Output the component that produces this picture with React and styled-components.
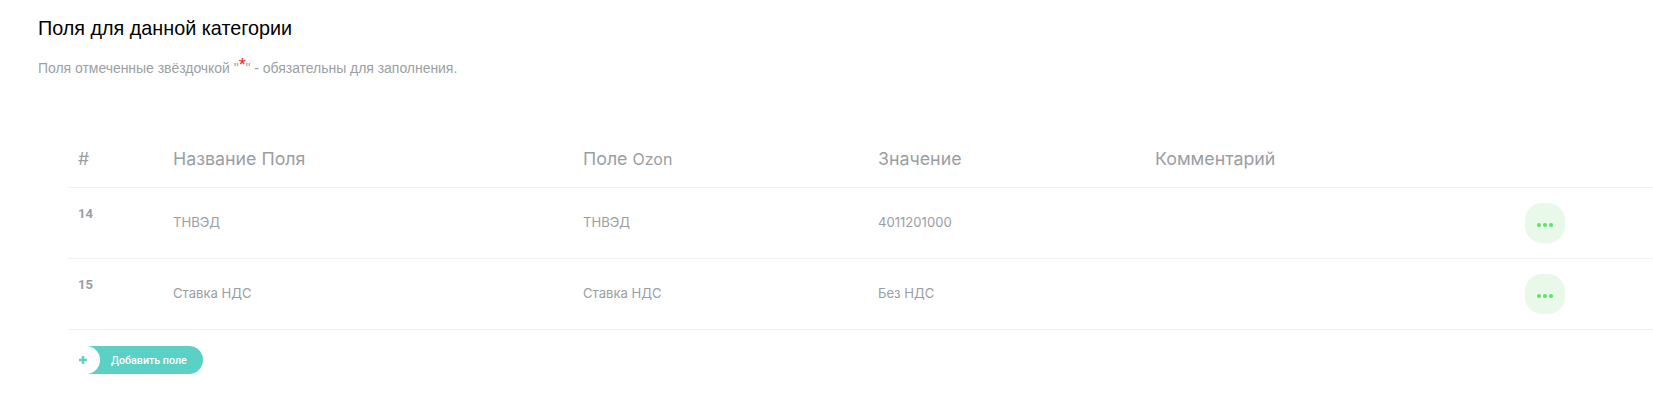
import React from 'react';
import styled, { createGlobalStyle } from 'styled-components';

const rows = [
  { id: 14, name: 'ТНВЭД', ozon: 'ТНВЭД', value: '4011201000' },
  { id: 15, name: 'Ставка НДС', ozon: 'Ставка НДС', value: 'Без НДС' },
];

const App = () => {
  return (
    <Page>
      <GlobalStyle />
      <Title>Поля для данной категории</Title>
      <Note>
        Поля отмеченные звёздочкой "<Star>*</Star>" - обязательны для заполнения.
      </Note>
      <Table>
        <HeadRow>
          <HeadCell>#</HeadCell>
          <HeadCell>Название Поля</HeadCell>
          <HeadCell>Поле <Latin>Ozon</Latin></HeadCell>
          <HeadCell>Значение</HeadCell>
          <HeadCell>Комментарий</HeadCell>
        </HeadRow>
        {rows.map((row) => (
          <Row key={row.id}>
            <RowNumber>{row.id}</RowNumber>
            <Cell>{row.name}</Cell>
            <Cell>{row.ozon}</Cell>
            <Cell>{row.value}</Cell>
            <Cell />
            <MoreButton aria-label="Действия">
              <Dot />
              <Dot />
              <Dot />
            </MoreButton>
          </Row>
        ))}
      </Table>
      <AddButton>
        <AddIcon viewBox="0 0 10 10">
          <path d="M5 1v8M1 5h8" />
        </AddIcon>
        <AddLabel>Добавить поле</AddLabel>
      </AddButton>
    </Page>
  );
};

const GlobalStyle = createGlobalStyle`
  html, body {
    margin: 0;
    background: #fff;
  }
`;
const Page = styled.div`
  width: 1653px;
  height: 406px;
  padding: 17px 0 0 38px;
  box-sizing: border-box;
  overflow: hidden;
  font-family: 'Liberation Sans', Arial, sans-serif;
`;
const Title = styled.h2`
  margin: 0;
  font-size: 19.8px;
  line-height: 23px;
  font-weight: 400;
  color: #000;
`;
const Note = styled.p`
  margin: 16px 0 0;
  font-size: 14px;
  line-height: 22px;
  letter-spacing: -0.04px;
  color: #9b9fa5;
`;
const Star = styled.span`
  font-size: 18px;
  color: #f01a1a;
  position: relative;
  top: -2px;
`;
const Table = styled.div`
  margin: 42px 0 0 30px;
  font-family: Roboto, 'Liberation Sans', sans-serif;
`;
const columns = '95px 410px 295px 277px 370px 1fr';
const HeadRow = styled.div`
  display: grid;
  grid-template-columns: ${columns};
  align-items: center;
  height: 66px;
  padding-left: 10px;
  border-bottom: 1px solid #f1f2f3;
`;
const HeadCell = styled.div`
  padding-top: 8px;
  font-family: Inter, Roboto, sans-serif;
  font-size: 17.8px;
  color: #9a9ea3;
`;
const Latin = styled.span`
  font-size: 16px;
`;
const Row = styled.div`
  display: grid;
  grid-template-columns: ${columns};
  align-items: center;
  height: 70px;
  padding-left: 10px;
  border-bottom: 1px solid #f1f2f3;
`;
const RowNumber = styled.div`
  align-self: start;
  margin-top: 18px;
  font-size: 13px;
  font-weight: 700;
  color: #9a9ea3;
`;
const Cell = styled.div`
  padding-bottom: 2px;
  font-family: Inter, Roboto, sans-serif;
  font-size: 13.1px;
  color: #9a9ea3;
`;
const MoreButton = styled.button`
  display: flex;
  align-items: center;
  justify-content: center;
  gap: 2.5px;
  width: 40px;
  height: 40px;
  padding: 4px 0 0;
  border: 0;
  border-radius: 17px;
  background: #e8f9e9;
`;
const Dot = styled.span`
  width: 3.5px;
  height: 3.5px;
  border-radius: 50%;
  background: #62e56f;
`;
const AddButton = styled.button`
  position: relative;
  display: flex;
  align-items: center;
  width: 135px;
  height: 28px;
  margin: 16px 0 0 30px;
  padding: 0 0 0 43px;
  border: 0;
  border-radius: 0 14px 14px 0;
  background: linear-gradient(90deg, #fff 23px, #5bd0c4 23px);
  overflow: hidden;
  &::before {
    content: '';
    position: absolute;
    left: 9px;
    top: 0;
    width: 23px;
    height: 28px;
    border-radius: 14px 0 0 14px;
    background: #5bd0c4;
  }
  &::after {
    content: '';
    position: absolute;
    left: 0;
    top: 0;
    width: 32px;
    height: 28px;
    border-radius: 0 14px 14px 0;
    background: #fff;
  }
`;
const AddIcon = styled.svg`
  position: absolute;
  z-index: 1;
  left: 10px;
  top: 9px;
  width: 10px;
  height: 10px;
  fill: none;
  stroke: #5bd0c4;
  stroke-width: 2.4;
`;
const AddLabel = styled.span`
  position: relative;
  font-family: Roboto, sans-serif;
  font-size: 10.7px;
  font-weight: 500;
  color: #fff;
`;

export default App;
